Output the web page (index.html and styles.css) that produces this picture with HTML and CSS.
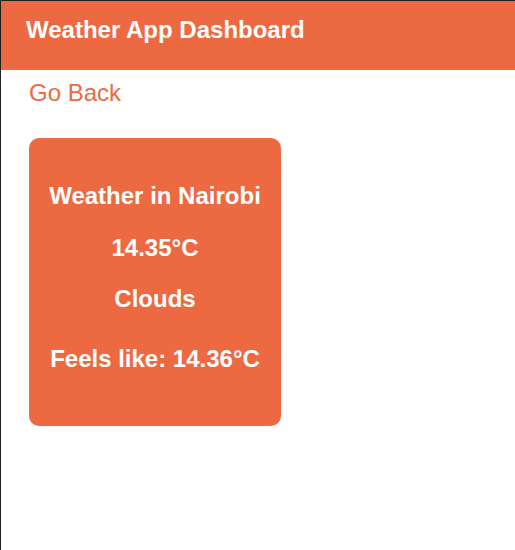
FILE: index.html
```html
<!DOCTYPE html>
<html lang="en">
<head>
<meta charset="utf-8">
<title>Weather App Dashboard</title>
<link rel="stylesheet" href="styles.css">
</head>
<body>
<header class="app-header">
  <h1 class="app-title">Weather App Dashboard</h1>
</header>
<main class="content">
  <a class="back-link" href="#">Go Back</a>
  <section class="weather-card">
    <h2 class="card-line card-title">Weather in Nairobi</h2>
    <p class="card-line card-temp">14.35°C</p>
    <p class="card-line card-desc">Clouds</p>
    <p class="card-line card-feels">Feels like: 14.36°C</p>
  </section>
</main>
</body>
</html>
```
FILE: styles.css
```css
html, body {
  height: 100%;
}
body {
  margin: 0;
  box-sizing: border-box;
  border-top: 1px solid #202020;
  border-left: 1px solid #202020;
  background: #ffffff;
  font-family: "Liberation Sans", Arial, sans-serif;
}
.app-header {
  background: #ec6941;
  padding: 15px 25px 26px;
}
.app-title {
  margin: 0;
  color: #ffffff;
  font-size: 24px;
  line-height: 28px;
  font-weight: bold;
}
.content {
  padding: 9px 28px 0;
}
.back-link {
  display: block;
  width: max-content;
  color: #ec6941;
  font-size: 24px;
  line-height: 28px;
  text-decoration: none;
}
.weather-card {
  margin-top: 31px;
  width: 252px;
  box-sizing: border-box;
  background: #ec6941;
  border-radius: 10px;
  padding: 20px 10px 20px;
  text-align: center;
  color: #ffffff;
}
.card-line {
  margin: 0;
  font-size: 24px;
  line-height: 28px;
  font-weight: bold;
}
.card-title { margin-top: 24px; }
.card-temp { margin-top: 24px; }
.card-desc { margin-top: 23px; }
.card-feels { margin-top: 32px; margin-bottom: 33px; }
```
